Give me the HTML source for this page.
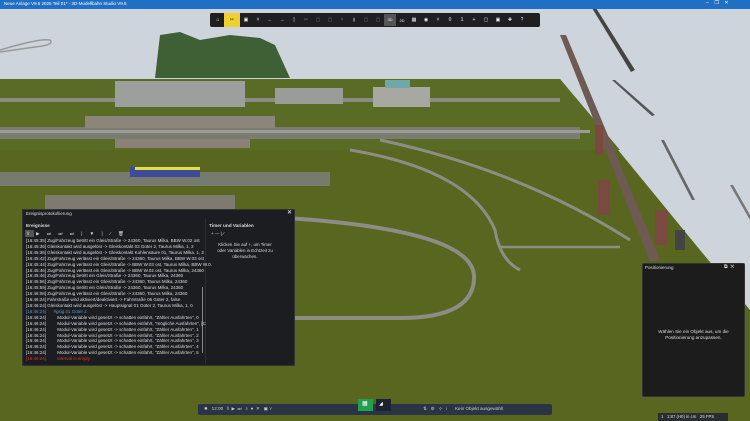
<!DOCTYPE html>
<html><head><meta charset="utf-8"><style>
*{margin:0;padding:0;box-sizing:border-box}
body{width:750px;height:421px;overflow:hidden;position:relative;font-family:"Liberation Sans",sans-serif;background:#cdd4dc}
.abs{position:absolute}
.t{font-size:4.6px;color:#ddd;white-space:nowrap;line-height:5.9px}
.tb{display:flex;align-items:center}
.tb span{display:inline-block;width:12px;text-align:center;font-size:5px;color:#eee}
</style></head><body>
<svg class="abs" style="left:0;top:0" width="750" height="421">
<rect x="0" y="0" width="750" height="421" fill="#cdd4dc"/>
<polygon points="0,79 560,79 700,250 750,310 750,421 0,421" fill="#58661f"/>
<polygon points="0,79 560,79 620,150 0,150" fill="#5a6b26"/>
<rect x="0" y="98" width="560" height="4" fill="#8a8c84"/>
<rect x="0" y="127" width="580" height="12" fill="#7a7c72"/>
<rect x="0" y="130" width="590" height="3" fill="#9a9b94"/>
<rect x="0" y="172" width="330" height="14" fill="#777a6e"/>
<rect x="115" y="81" width="130" height="26" fill="#9c9f9c"/>
<rect x="275" y="88" width="68" height="16" fill="#9a9c98"/>
<rect x="373" y="87" width="57" height="20" fill="#a8a8a2"/>
<rect x="385" y="80" width="25" height="8" fill="#6fa6a8"/>
<rect x="85" y="116" width="190" height="12" fill="#8b857a"/>
<rect x="115" y="139" width="135" height="9" fill="#8a8278"/>
<rect x="130" y="167" width="70" height="10" fill="#3c4c98"/>
<rect x="135" y="167" width="65" height="3" fill="#e8e040"/>
<polygon points="155,78 160,35 180,32 200,40 230,35 260,38 275,45 290,78" fill="#3f5f35"/>
<rect x="45" y="195" width="190" height="14" fill="#7d7a70"/>
<path d="M0 50 Q40 38 50 40 Q55 45 35 47 L0 52" stroke="#999" stroke-width="1.5" fill="none"/>
<path d="M287 218 Q470 230 474 275 Q476 318 400 318 L295 318" stroke="#8d8d86" stroke-width="4" fill="none"/>
<path d="M350 150 Q470 170 495 230 Q500 260 520 270" stroke="#8d8d86" stroke-width="3" fill="none"/>
<path d="M380 140 Q520 170 630 240" stroke="#8d8d86" stroke-width="3" fill="none"/>
<path d="M500 247 L620 247" stroke="#8d8d86" stroke-width="2.5" fill="none"/>
<polygon points="560,35 566,35 660,260 650,262" fill="#6e5a52"/>
<polygon points="592,8 596,8 635,70 631,72" fill="#444"/>
<polygon points="612,80 615,80 655,115 652,116" fill="#555"/>
<polygon points="661,140 664,140 695,200 692,200" fill="#666"/>
<polygon points="730,185 733,185 750,215 750,220" fill="#777"/>
<rect x="595" y="125" width="8" height="30" fill="#7a4a40"/>
<rect x="598" y="180" width="12" height="35" fill="#7a4a40"/>
<rect x="655" y="210" width="12" height="35" fill="#7a4a40"/>
<rect x="675" y="230" width="10" height="20" fill="#444"/>
</svg>
<div class="abs" style="left:0;top:0;width:750px;height:9px;background:#1f6fc4"></div>
<div class="abs t" style="left:4px;top:1px;font-size:4.5px;color:#fff">Neue Anlage V9.5 2025 Teil 01* - 3D-Modellbahn Studio V9.5</div>
<div class="abs t" style="left:706px;top:1px;font-size:5px;color:#fff">–&nbsp;&nbsp;&nbsp;&nbsp;❐&nbsp;&nbsp;&nbsp;&nbsp;✕</div>
<div class="abs tb" style="left:210px;top:13px;width:330px;height:14px;background:#1e1f21;border-radius:2px;padding-left:2px">
<span>⌂</span><span style="background:#f0d030;color:#222;height:14px;width:16px;line-height:14px">✂</span><span>▣</span><span>˅</span><span>←</span><span>→</span><span>|</span><span style="color:#777">✂</span><span style="color:#777">▢</span><span style="color:#777">▢</span><span style="color:#777">˅</span><span style="color:#777">▮</span><span style="color:#777">▢</span><span style="color:#777">▢</span><span style="background:#555;height:12px;line-height:12px;font-size:4px">3D</span><span style="font-size:4px">2D</span><span>▦</span><span>◉</span><span>˅</span><span>0</span><span>1</span><span>+</span><span>▢</span><span>▣</span><span>✚</span><span>?</span>
</div>
<div class="abs" style="left:22px;top:209px;width:273px;height:157px;background:#1c1d20;border:1px solid #333"></div>
<div class="abs t" style="left:26px;top:211px;font-size:4.5px">Ereignisprotokollierung</div>
<div class="abs t" style="left:287px;top:211px;font-size:6px;color:#fff">✕</div>
<div class="abs t" style="left:26px;top:223px;font-weight:bold;font-size:4.7px">Ereignisse</div>
<div class="abs t" style="left:209px;top:223px;font-weight:bold;font-size:4.7px">Timer und Variablen</div>
<div class="abs" style="left:25px;top:230px;width:9px;height:7px;background:#555"></div>
<div class="abs t" style="left:27px;top:231px;letter-spacing:3px">‖ ▶ ⏭ ⏭ ⏭ | ▼ | ⁄ 🗑</div>
<div class="abs t" style="left:211px;top:231px">+ — | ⁄</div>
<div class="abs t" style="left:216px;top:242px;text-align:center;width:58px;white-space:normal;font-size:4.4px">Klicken Sie auf +, um Timer oder Variablen in Echtzeit zu überwachen.</div>
<div class="abs" style="left:205px;top:218px;width:1px;height:146px;background:#2c2d30"></div>
<div class="abs" style="left:202px;top:287px;width:1px;height:66px;background:#888"></div>
<div class="abs t" style="left:26px;top:238px;font-size:4.5px">
[16:45:35] Zug/Fahrzeug betritt ein Gleis/Straße -&gt; 24360, Taurus Milka, BBW W.02 ost<br>
[16:45:36] Gleiskontakt wird ausgelöst -&gt; Gleiskontakt 03 Güter 2, Taurus Milka, 1, 2<br>
[16:45:36] Gleiskontakt wird ausgelöst -&gt; Gleiskontakt Kohlensäure 01, Taurus Milka, 1, 2<br>
[16:45:42] Zug/Fahrzeug verlässt ein Gleis/Straße -&gt; 24360, Taurus Milka, BBW W.03 ost<br>
[16:45:44] Zug/Fahrzeug verlässt ein Gleis/Straße -&gt; BBW W.03 ost, Taurus Milka, BBW W.0.<br>
[16:45:46] Zug/Fahrzeug verlässt ein Gleis/Straße -&gt; BBW W.02 ost, Taurus Milka, 24360<br>
[16:45:46] Zug/Fahrzeug betritt ein Gleis/Straße -&gt; 24360, Taurus Milka, 24360<br>
[16:45:56] Zug/Fahrzeug verlässt ein Gleis/Straße -&gt; 24360, Taurus Milka, 24360<br>
[16:45:59] Zug/Fahrzeug betritt ein Gleis/Straße -&gt; 24360, Taurus Milka, 24360<br>
[16:46:08] Zug/Fahrzeug verlässt ein Gleis/Straße -&gt; 24360, Taurus Milka, 24360<br>
[16:46:24] Fahrstraße wird aktiviert/deaktiviert -&gt; Fahrstraße 06 Güter 2, false<br>
[16:46:24] Gleiskontakt wird ausgelöst -&gt; Hauptsignal 01 Güter 2, Taurus Milka, 1, 0<br>
<span style="color:#4a9fe0">[16:46:24]&nbsp;&nbsp;&nbsp;&nbsp;&nbsp;&nbsp;#gsig.01 Güter 2</span><br>
[16:46:24]&nbsp;&nbsp;&nbsp;&nbsp;&nbsp;&nbsp;&nbsp;&nbsp;&nbsp;Modul-Variable wird gesetzt -&gt; schatten einfahrt, "Zähler Ausfahrten", 0<br>
[16:46:24]&nbsp;&nbsp;&nbsp;&nbsp;&nbsp;&nbsp;&nbsp;&nbsp;&nbsp;Modul-Variable wird gesetzt -&gt; schatten einfahrt, "mögliche Ausfahrten", [C<br>
[16:46:24]&nbsp;&nbsp;&nbsp;&nbsp;&nbsp;&nbsp;&nbsp;&nbsp;&nbsp;Modul-Variable wird gesetzt -&gt; schatten einfahrt, "Zähler Ausfahrten", 1<br>
[16:46:24]&nbsp;&nbsp;&nbsp;&nbsp;&nbsp;&nbsp;&nbsp;&nbsp;&nbsp;Modul-Variable wird gesetzt -&gt; schatten einfahrt, "Zähler Ausfahrten", 2<br>
[16:46:24]&nbsp;&nbsp;&nbsp;&nbsp;&nbsp;&nbsp;&nbsp;&nbsp;&nbsp;Modul-Variable wird gesetzt -&gt; schatten einfahrt, "Zähler Ausfahrten", 3<br>
[16:46:24]&nbsp;&nbsp;&nbsp;&nbsp;&nbsp;&nbsp;&nbsp;&nbsp;&nbsp;Modul-Variable wird gesetzt -&gt; schatten einfahrt, "Zähler Ausfahrten", 4<br>
[16:46:24]&nbsp;&nbsp;&nbsp;&nbsp;&nbsp;&nbsp;&nbsp;&nbsp;&nbsp;Modul-Variable wird gesetzt -&gt; schatten einfahrt, "Zähler Ausfahrten", 5<br>
<span style="color:#e03030">[16:46:24]&nbsp;&nbsp;&nbsp;&nbsp;&nbsp;&nbsp;&nbsp;&nbsp;&nbsp;Interval is empty</span>
</div>
<div class="abs" style="left:642px;top:263px;width:103px;height:134px;background:#1c1c1c;border:1px solid #333;border-radius:2px"></div>
<div class="abs t" style="left:645px;top:265px;font-size:4.5px">Positionierung</div>
<div class="abs t" style="left:724px;top:265px;font-size:5px;color:#fff">⧉&nbsp;&nbsp;✕</div>
<div class="abs t" style="left:645px;top:329px;width:97px;text-align:center;white-space:normal;font-size:4.6px">Wählen Sie ein Objekt aus, um die Positionierung anzupassen.</div>
<div class="abs" style="left:198px;top:404px;width:354px;height:11px;background:#2a3445;border-radius:2px"></div>
<div class="abs" style="left:358px;top:399px;width:15px;height:12px;background:#22a050"></div>
<div class="abs t" style="left:362px;top:402px;color:#fff;font-size:6px">▦</div>
<div class="abs" style="left:376px;top:399px;width:15px;height:12px;background:#1a2233"></div>
<div class="abs t" style="left:379px;top:402px;color:#fff;font-size:5px">◢</div>
<div class="abs t" style="left:204px;top:406px;font-size:4.6px;color:#ccc">✹&nbsp;&nbsp;&nbsp;12:00&nbsp;&nbsp;&nbsp;‖&nbsp;&nbsp;▶&nbsp;&nbsp;⏭&nbsp;&nbsp;&nbsp;⌕&nbsp;&nbsp;●&nbsp;&nbsp;✕&nbsp;&nbsp;&nbsp;▣ ˅</div>
<div class="abs t" style="left:423px;top:406px;font-size:4.6px;color:#ccc">⇅&nbsp;&nbsp;&nbsp;⚙&nbsp;&nbsp;&nbsp;⊹&nbsp;&nbsp;&nbsp;i&nbsp;&nbsp;&nbsp;&nbsp;&nbsp;&nbsp;Kein Objekt ausgewählt</div>
<div class="abs" style="left:658px;top:413px;width:70px;height:8px;background:#2a2d30"></div>
<div class="abs t" style="left:661px;top:414px;font-size:4.3px">1&nbsp;&nbsp;&nbsp;1:87 (H0) in cm&nbsp;&nbsp;&nbsp;25 FPS</div>
</body></html>
